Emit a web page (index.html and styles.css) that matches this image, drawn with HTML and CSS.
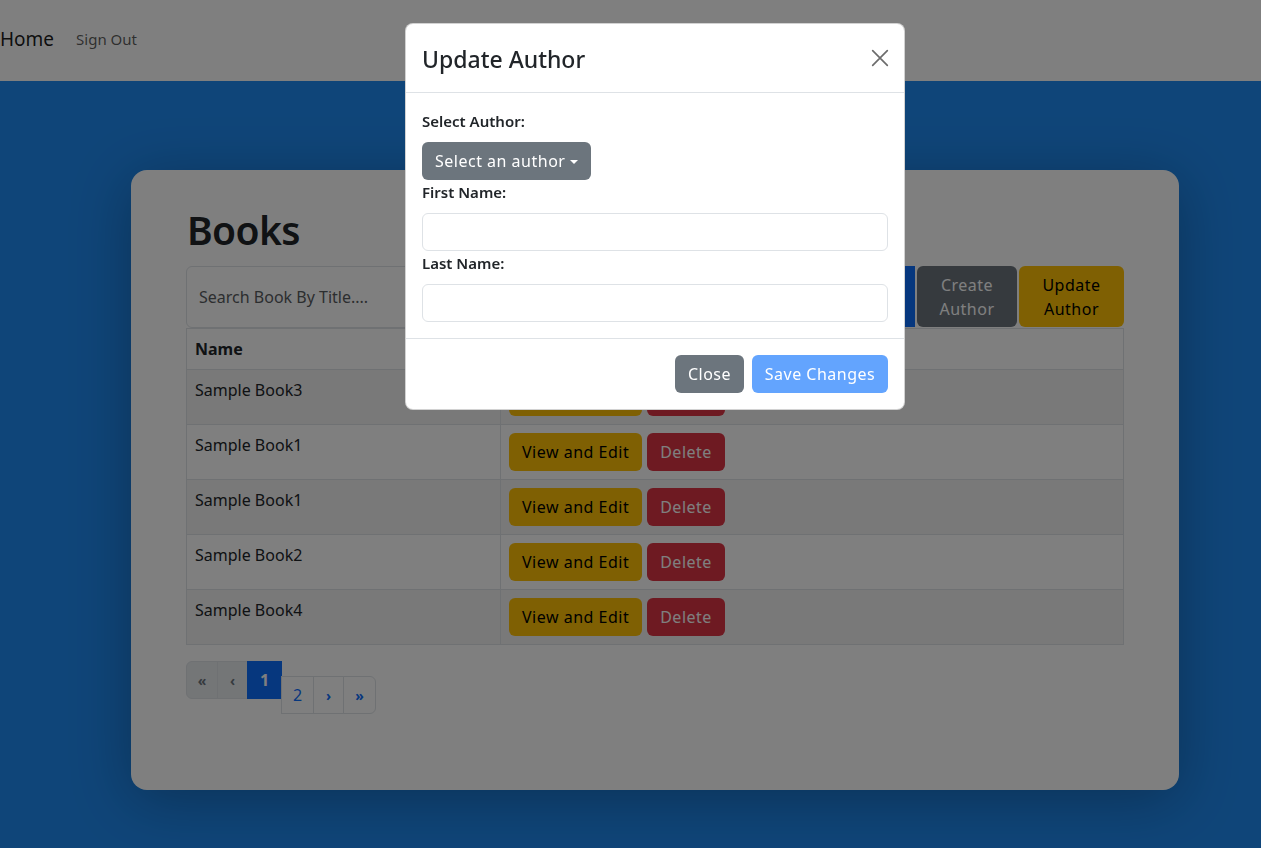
FILE: index.html
```html
<!DOCTYPE html>
<html lang="en">
<head>
<meta charset="utf-8">
<title>Books</title>
<link rel="stylesheet" href="styles.css">
</head>
<body>
<nav class="navbar">
  <a class="brand" href="#">Home</a>
  <a class="nav-link" href="#">Sign Out</a>
</nav>
<main class="page">
  <section class="card">
    <h1 class="title">Books</h1>
    <div class="search-row">
      <input class="search-input" type="text" placeholder="Search Book By Title....">
      <button class="btn btn-primary btn-tall">Create Book</button>
      <button class="btn btn-secondary btn-tall btn-create">Create Author</button>
      <button class="btn btn-warning btn-tall btn-update">Update Author</button>
    </div>
    <table class="table">
      <thead>
        <tr><th class="col-name">Name</th><th>Actions</th></tr>
      </thead>
      <tbody>
        <tr><td>Sample Book3</td><td><button class="btn btn-warning">View and Edit</button><button class="btn btn-danger">Delete</button></td></tr>
        <tr><td>Sample Book1</td><td><button class="btn btn-warning">View and Edit</button><button class="btn btn-danger">Delete</button></td></tr>
        <tr><td>Sample Book1</td><td><button class="btn btn-warning">View and Edit</button><button class="btn btn-danger">Delete</button></td></tr>
        <tr><td>Sample Book2</td><td><button class="btn btn-warning">View and Edit</button><button class="btn btn-danger">Delete</button></td></tr>
        <tr><td>Sample Book4</td><td><button class="btn btn-warning">View and Edit</button><button class="btn btn-danger">Delete</button></td></tr>
      </tbody>
    </table>
    <div class="pagination">
      <div class="page-group">
        <span class="page-item disabled first">«</span>
        <span class="page-item disabled">‹</span>
        <span class="page-item active">1</span>
      </div>
      <div class="page-group lower">
        <a class="page-item link" href="#">2</a>
        <a class="page-item link small" href="#">›</a>
        <a class="page-item link small last" href="#">»</a>
      </div>
    </div>
  </section>
</main>

<div class="backdrop"></div>
<div class="modal">
  <div class="modal-header">
    <h2 class="modal-title">Update Author</h2>
    <button class="close-btn" aria-label="Close">
      <svg width="18" height="18" viewBox="0 0 16 16"><path d="M1.5 1.5 L14.5 14.5 M14.5 1.5 L1.5 14.5" stroke="#6c6c6c" stroke-width="1.5" fill="none" stroke-linecap="round"/></svg>
    </button>
  </div>
  <div class="modal-body">
    <label class="label">Select Author:</label>
    <button class="btn btn-secondary dropdown">Select an author<span class="caret"></span></button>
    <label class="label">First Name:</label>
    <input class="form-input" type="text">
    <label class="label">Last Name:</label>
    <input class="form-input" type="text">
  </div>
  <div class="modal-footer">
    <button class="btn btn-secondary">Close</button>
    <button class="btn btn-save">Save Changes</button>
  </div>
</div>
</body>
</html>
```
FILE: styles.css
```css
* { box-sizing: border-box; }
html, body { margin: 0; padding: 0; }
body {
  font-family: "Noto Sans", "Open Sans", sans-serif;
  font-size: 16px;
  line-height: 1.5;
  color: #212529;
  background: #1f8bf2;
}
.navbar {
  height: 81px;
  background: #fff;
  display: flex;
  align-items: center;
  gap: 22px;
  padding-bottom: 3px;
}
.brand {
  font-size: 19px;
  color: rgba(0,0,0,.9);
  text-decoration: none;
  line-height: 30px;
}
.nav-link {
  font-size: 15px;
  color: rgba(0,0,0,.65);
  text-decoration: none;
}
.page {
  background: #1f8bf2;
  padding: 89px 82px 58px 131px;
  min-height: 767px;
}
.card {
  width: 1048px;
  height: 620px;
  background: #fff;
  border-radius: 16px;
  box-shadow: 0 10px 60px rgba(0,0,0,.28);
  padding: 36px 55px 0 55px;
}
.title {
  margin: 0 0 12px 1px;
  font-size: 39px;
  font-weight: 600;
  line-height: 48px;
  letter-spacing: -0.6px;
  color: #212529;
}
.search-row {
  display: flex;
  gap: 2px;
  height: 62px;
}
.search-input {
  flex: 1;
  height: 62px;
  border: 1px solid #dee2e6;
  border-radius: 6px 0 0 6px;
  padding: 0 12px;
  font-family: inherit;
  font-size: 16px;
  color: #212529;
}
.search-input::placeholder { color: #595c5f; }
.btn {
  font-family: inherit;
  font-size: 16px;
  line-height: 24px;
  padding: 6px 12px;
  border: 1px solid transparent;
  border-radius: 6px;
  letter-spacing: 0.5px;
  cursor: pointer;
  white-space: nowrap;
}
.btn-tall { height: 61px; width: 100px; padding: 6px 8px; white-space: normal; }
.btn-update { width: 105px; }
.btn-primary { background: #0d6efd; color: #fff; border-radius: 0; }
.btn-secondary { background: #6c757d; color: #fff; }
.btn-create { border-radius: 6px; }
.btn-warning { background: #ffc107; color: #000; }
.btn-danger { background: #dc3545; color: #fff; }
.table {
  width: 100%;
  border-collapse: collapse;
  border: 1px solid #dee2e6;
}
.table th, .table td {
  border: 1px solid #dee2e6;
  padding: 8px 8px;
  text-align: left;
  vertical-align: top;
  line-height: 24px;
}
.table th { font-weight: 700; height: 41px; padding-top: 8px; }
.col-name { width: 314px; }
.table td { height: 54px; }
.table tbody tr:nth-child(odd) td { background: #f2f2f2; }
.table td .btn { margin-right: 5px; height: 38px; }
.pagination {
  display: flex;
  margin-top: 16px;
  align-items: flex-start;
}
.page-group { display: flex; }
.page-group.lower { margin-top: 15px; }
.page-item {
  display: flex;
  align-items: center;
  justify-content: center;
  height: 38px;
  border: 1px solid #dee2e6;
  margin-left: -1px;
  font-size: 16px;
  text-decoration: none;
}
.disabled {
  width: 31px;
  background: #e9ecef;
  color: #6c757d;
  font-weight: 700;
  font-size: 14px;
}
.first { margin-left: 0; width: 32px; border-radius: 6px 0 0 6px; }
.active {
  width: 35px;
  background: #0d6efd;
  border-color: #0d6efd;
  color: #fff;
  font-weight: 700;
}
.link { width: 33px; background: #fff; color: #0d6efd; }
.small { width: 31px; font-weight: 700; font-size: 14px; }
.last { width: 33px; border-radius: 0 6px 6px 0; }
.backdrop {
  position: fixed;
  inset: 0;
  background: rgba(0,0,0,.5);
}
.modal {
  position: fixed;
  top: 23px;
  left: 405px;
  width: 500px;
  background: #fff;
  border: 1px solid rgba(0,0,0,.175);
  border-radius: 8px;
}
.modal-header {
  display: flex;
  align-items: center;
  justify-content: space-between;
  padding: 16px;
  border-bottom: 1px solid #dee2e6;
  height: 69px;
}
.modal-title {
  margin: 0;
  font-size: 23px;
  font-weight: 500;
  line-height: 36px;
  color: #212529;
  padding-top: 2px;
}
.close-btn {
  background: none;
  border: 0;
  padding: 0;
  width: 20px;
  height: 20px;
  display: flex;
  align-items: center;
  justify-content: center;
  margin-right: -2px;
}
.modal-body {
  padding: 16px;
  display: flex;
  flex-direction: column;
  align-items: flex-start;
}
.label {
  font-size: 15px;
  font-weight: 600;
  line-height: 24px;
  margin-bottom: 9px;
  color: #212529;
}
.dropdown {
  height: 38px;
  display: flex;
  align-items: center;
  padding: 6px 12px;
}
.caret {
  display: inline-block;
  margin-left: 5px;
  width: 0;
  height: 0;
  border-top: 4.5px solid #fff;
  border-left: 4.5px solid transparent;
  border-right: 4.5px solid transparent;
  margin-top: 1px;
}
.form-input {
  width: 100%;
  height: 38px;
  border: 1px solid #dee2e6;
  border-radius: 6px;
  font-family: inherit;
  font-size: 16px;
}
.modal-footer {
  border-top: 1px solid #dee2e6;
  padding: 16px;
  display: flex;
  justify-content: flex-end;
  gap: 8px;
}
.modal-footer .btn { height: 38px; }
.btn-save { background: #63a4fe; color: #fff; width: 136px; padding: 6px 10px; }
```
